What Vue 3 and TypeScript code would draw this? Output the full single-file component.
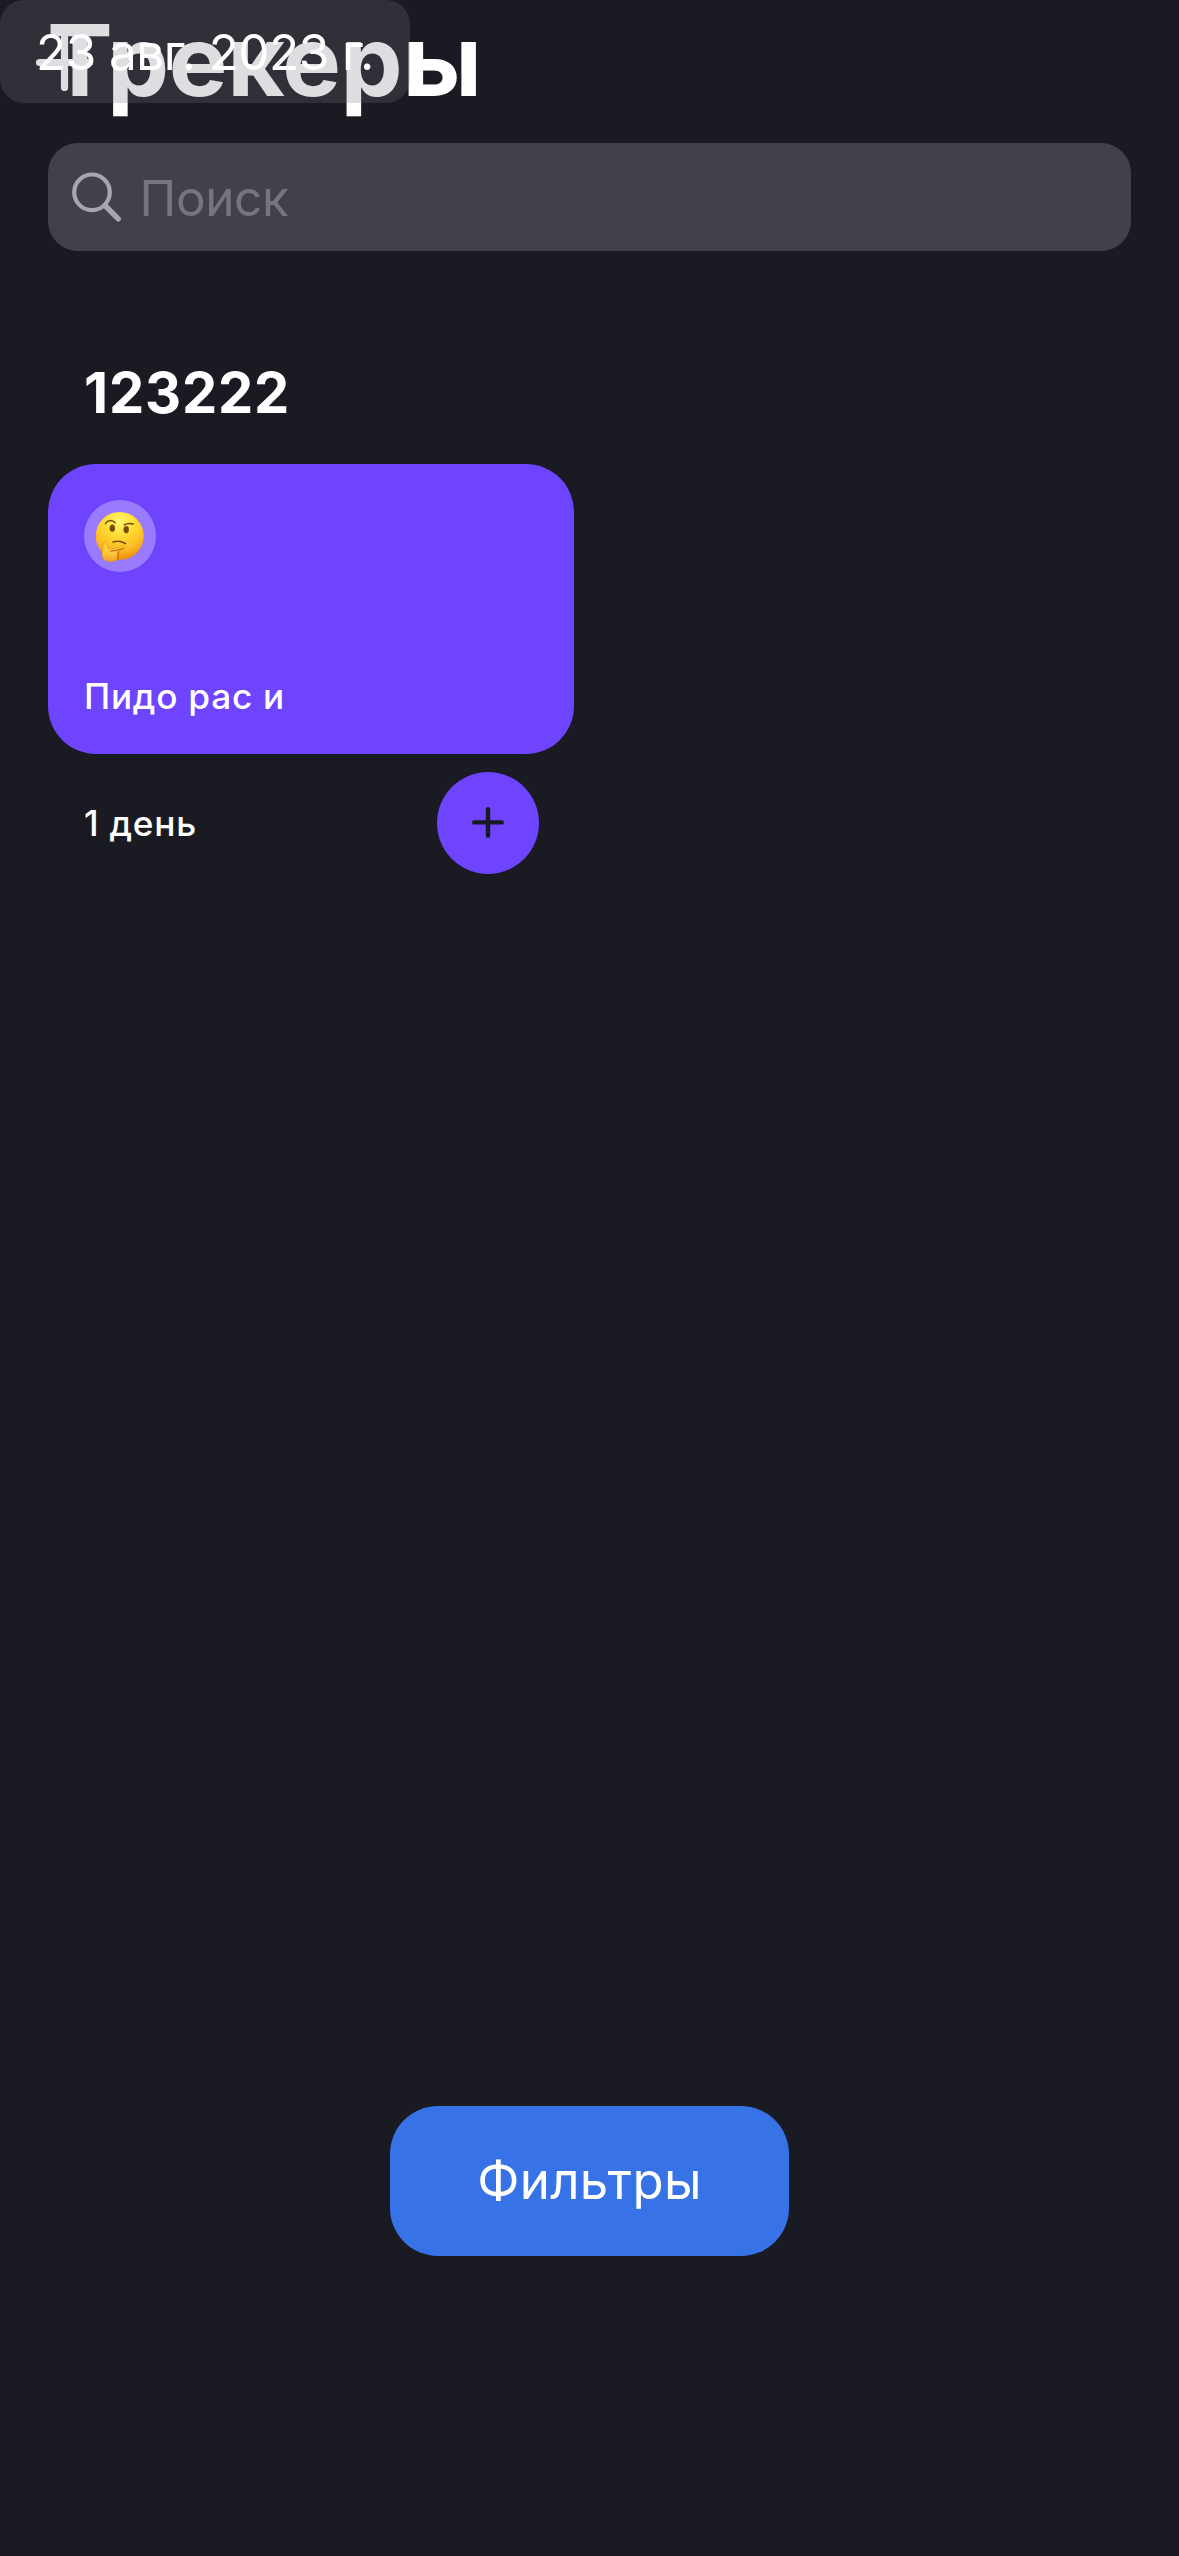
<script setup lang="ts">
interface Tracker {
  id: number
  title: string
  days: string
}
interface Category {
  name: string
  trackers: Tracker[]
}

const categories: Category[] = [
  { name: '123222', trackers: [{ id: 1, title: 'Пидо рас и', days: '1 день' }] },
]
</script>

<template>
  <main class="screen">
    <header class="header">
      <h1 class="title">Трекеры</h1>
      <svg class="add" viewBox="0 0 57 57" aria-hidden="true">
        <path d="M28.5 3.5V53.5M3.5 28.5H53.5" />
      </svg>
      <div class="date"><span>23 авг. 2023 г.</span></div>
    </header>

    <div class="search">
      <svg class="glass" viewBox="0 0 50 50" aria-hidden="true">
        <circle cx="20" cy="20.3" r="17.8" />
        <path d="M33 33.5L46.3 46.8" class="handle" />
      </svg>
      <span class="placeholder">Поиск</span>
    </div>

    <section v-for="category in categories" :key="category.name" class="category">
      <h2 class="category-name">{{ category.name }}</h2>
      <div class="grid">
        <article v-for="tracker in category.trackers" :key="tracker.id" class="tracker">
          <div class="card">
            <div class="emoji">
              <svg viewBox="0 0 72 72" aria-hidden="true">
                <defs>
                  <radialGradient id="face" cx="0.5" cy="0.2" r="0.82">
                    <stop offset="0" stop-color="#fff56f" />
                    <stop offset="0.35" stop-color="#ffdf35" />
                    <stop offset="0.72" stop-color="#fdba24" />
                    <stop offset="1" stop-color="#ec860a" />
                  </radialGradient>
                  <linearGradient id="hand" x1="0" y1="0" x2="0" y2="1">
                    <stop offset="0" stop-color="#ffd63a" />
                    <stop offset="0.6" stop-color="#ffc83b" />
                    <stop offset="1" stop-color="#f0a029" />
                  </linearGradient>
                </defs>
                <circle cx="35.7" cy="36" r="24" fill="url(#face)" />
                <ellipse cx="28.3" cy="28.2" rx="2.7" ry="3.6" fill="#7a4a0c" />
                <ellipse cx="42.2" cy="29.6" rx="2.7" ry="3.6" fill="#7a4a0c" />
                <g class="ink">
                  <path d="M21.4 23.6C23.8 19.8 28.5 19.6 31 22.8" />
                  <path d="M40.3 24.9C43 23 46.5 23.2 49.3 23.9" />
                  <path d="M29 42C33 40.8 38 41.4 41.3 43.5" />
                </g>
                <path
                  d="M20.2 42C22.8 41 23.4 44.5 23.9 48.2C29 49.6 35 46.8 39.7 46.1C41.8 46 41.8 48.2 39.8 49L33.8 51.3C35 54 34.5 59 32.5 60.3C29 61.9 22.5 61.8 19.7 59.6C17.5 57.2 18 51.4 18.8 48C19.3 45.6 18.8 43.2 20.2 42Z"
                  fill="url(#hand)" stroke="#e5951b" stroke-width="0.7"
                />
                <path d="M26 50.9C30 51.3 35 49.6 39.8 48.3M33.6 51.5L34.3 53.5L33.6 55.5L34.2 57.5L33.2 59.8" fill="none" stroke="#b96c0a" stroke-width="1.1" />
              </svg>
            </div>
            <span class="tracker-title">{{ tracker.title }}</span>
          </div>
          <div class="tracker-footer">
            <span class="days">{{ tracker.days }}</span>
            <button class="plus" type="button" aria-label="+">
              <svg viewBox="0 0 102 102" aria-hidden="true">
                <path d="M51 37.2V63.8M37.2 50.4H64.8" />
              </svg>
            </button>
          </div>
        </article>
      </div>
    </section>

    <button class="filters" type="button"><span>Фильтры</span></button>
  </main>
</template>

<style>
body {
  margin: 0;
  background: #1a1b22;
}
</style>

<style scoped>
.screen {
  box-sizing: border-box;
  width: 1179px;
  height: 2556px;
  display: flex;
  flex-direction: column;
  overflow: hidden;
  background: #1a1b22;
  color: #fff;
  font-family: Inter, "Liberation Sans", sans-serif;
}
.header {
  position: relative;
  height: 143px;
  flex: none;
}
.title {
  margin: 0;
  padding: 0 0 0 47px;
  font-size: 98.6px;
  font-weight: 700;
  line-height: 121px;
  letter-spacing: -0.3px;
}
.add {
  position: absolute;
  left: 36px;
  top: 34px;
  width: 57px;
  height: 57px;
  fill: none;
  stroke: #fff;
  stroke-width: 7.2;
  stroke-linecap: round;
}
.date {
  position: absolute;
  left: 0;
  top: 0;
  width: 410px;
  height: 103px;
  box-sizing: border-box;
  padding-left: 36px;
  border-radius: 24px;
  background: rgba(118, 118, 128, 0.24);
  font-size: 49.5px;
  line-height: 105px;
  letter-spacing: -0.55px;
  white-space: nowrap;
}
.search {
  flex: none;
  display: flex;
  align-items: center;
  height: 108px;
  margin: 0 48px;
  padding-left: 24px;
  box-sizing: border-box;
  border-radius: 30px;
  background: #414149;
}
.glass {
  width: 50px;
  height: 50px;
  fill: none;
  stroke: #a6a6b0;
  stroke-width: 4.2;
}
.handle {
  stroke-width: 5.4;
  stroke-linecap: round;
}
.placeholder {
  margin-left: 17.5px;
  padding-top: 1px;
  font-size: 49.5px;
  line-height: 60px;
  letter-spacing: -0.4px;
  color: #75757f;
}
.category {
  flex: none;
  padding: 108px 48px 0;
}
.category-name {
  margin: 0 0 36px 36px;
  font-size: 56px;
  line-height: 69px;
  font-weight: 700;
  letter-spacing: 0.8px;
}
.grid {
  display: grid;
  grid-template-columns: repeat(2, 526px);
  gap: 31px;
}
.card {
  display: flex;
  flex-direction: column;
  justify-content: space-between;
  align-items: flex-start;
  height: 289.5px;
  box-sizing: border-box;
  padding: 36px 36px 37px;
  border-radius: 48px;
  background: #6e44fe;
}
.emoji {
  width: 72px;
  height: 72px;
  border-radius: 50%;
  background: rgba(255, 255, 255, 0.3);
}
.emoji svg,
.plus svg {
  display: block;
  width: 100%;
  height: 100%;
}
.ink {
  fill: none;
  stroke: #7a4a0c;
  stroke-width: 1.5;
  stroke-linecap: round;
}
.tracker-title,
.days {
  font-size: 35.2px;
  line-height: 42px;
  font-weight: 500;
  letter-spacing: 0.75px;
}
.tracker-footer {
  display: flex;
  align-items: center;
  justify-content: space-between;
  padding: 18.5px 35px 0 36px;
}
.plus {
  width: 102px;
  height: 102px;
  padding: 0;
  border: 0;
  border-radius: 50%;
  background: #6e44fe;
}
.plus path {
  fill: none;
  stroke: #1a1b22;
  stroke-width: 4.4;
  stroke-linecap: round;
}
.filters {
  flex: none;
  align-self: center;
  width: 399px;
  height: 150px;
  margin: auto 0 300px;
  padding: 0;
  border: 0;
  border-radius: 48px;
  background: #3772e7;
  color: #fff;
  font: 400 51px/60px Inter, "Liberation Sans", sans-serif;
  letter-spacing: 0.3px;
}
</style>
